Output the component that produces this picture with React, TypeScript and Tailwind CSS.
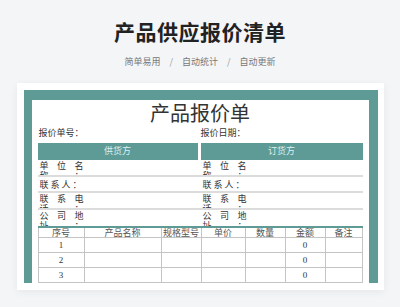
const cols = [
  { label: '序号', w: 'w-[45px]' },
  { label: '产品名称', w: 'w-[77px]' },
  { label: '规格型号', w: 'w-[40px]' },
  { label: '单价', w: 'w-[44px]' },
  { label: '数量', w: 'w-[40px]' },
  { label: '金额', w: 'w-[40px]' },
  { label: '备注', w: 'flex-1' },
];

function SplitLabel({ chars, tail }: { chars: string[]; tail: string }) {
  return (
    <div className="w-[44px] ml-[2px] text-[9px] leading-[10px] pt-[1px]">
      <div className="flex justify-between">
        {chars.map((c) => (
          <span key={c}>{c}</span>
        ))}
      </div>
      <div className="flex justify-between">
        <span>{tail}</span>
        <span className="w-[9px]">：</span>
      </div>
    </div>
  );
}

function InfoRow({ h, children }: { h: string; children: React.ReactNode }) {
  return (
    <div className={`flex ${h} overflow-hidden border-b-[2px] border-[#dcdcdc]`}>
      <div className="w-[163px]">{children}</div>
      <div className="flex-1">{children}</div>
    </div>
  );
}

export default function App() {
  return (
    <div className="w-[400px] h-[307px] overflow-hidden bg-[#f4f5f7] flex flex-col items-center font-['Noto_Sans_CJK_SC',sans-serif]">
      {/* Header */}
      <h1 className="mt-[19px] text-[21px] leading-[24px] font-bold text-[#222] tracking-[0.5px]">产品供应报价清单</h1>
      <p className="mt-[12px] text-[9px] leading-[14px] text-[#777] flex gap-[9px]">
        <span>简单易用</span>
        <span className="text-[#999]">/</span>
        <span>自动统计</span>
        <span className="text-[#999]">/</span>
        <span>自动更新</span>
      </p>

      {/* Card */}
      <div className="mt-[14px] w-[367px] bg-white pt-[7px] pl-[7px] pr-[6px] pb-[7px] shadow-[0_2px_8px_rgba(0,0,0,0.06)]">
        <div className="bg-[#5e9b97] pt-[10px] pl-[8px] pr-[9px]">
          <div className="bg-white px-[6px] text-[#333] font-['Liberation_Serif','Noto_Sans_CJK_SC',serif]">
            <div className="h-[27px] pt-[1px] leading-[26px] text-center text-[20px] text-[#333]">产品报价单</div>
            <div className="flex h-[13px] items-center text-[9px]">
              <div className="w-[163px] pl-[1px]">报价单号：</div>
              <div>报价日期：</div>
            </div>

            {/* party headers */}
            <div className="mt-[3px] flex gap-[3px] h-[17px] text-[9px] text-[#dff0ee]">
              <div className="w-[160px] bg-[#5e9b97] flex items-center justify-center">供货方</div>
              <div className="flex-1 bg-[#5e9b97] flex items-center justify-center">订货方</div>
            </div>

            <InfoRow h="h-[17px]">
              <SplitLabel chars={['单', '位', '名']} tail="称" />
            </InfoRow>
            <InfoRow h="h-[16px]">
              <div className="ml-[2px] pt-[3px] text-[9px] leading-[10px] tracking-[2px]">联系人：</div>
            </InfoRow>
            <InfoRow h="h-[17px]">
              <SplitLabel chars={['联', '系', '电']} tail="话" />
            </InfoRow>
            <div className="flex h-[16px] overflow-hidden">
              <div className="w-[163px]">
                <SplitLabel chars={['公', '司', '地']} tail="址" />
              </div>
              <div className="flex-1">
                <SplitLabel chars={['公', '司', '地']} tail="址" />
              </div>
            </div>

            {/* items table */}
            <div className="border-t-[2px] border-[#5e9b97] text-[9px]">
              <div className="flex h-[10px] leading-[10px] border-x border-b border-[#c4c4c4] text-[#555]">
                {cols.map((c, i) => (
                  <div key={c.label} className={`${c.w} text-center ${i > 0 ? 'border-l border-[#c4c4c4]' : ''}`}>
                    {c.label}
                  </div>
                ))}
              </div>
              {[1, 2, 3].map((n) => (
                <div key={n} className="flex h-[15px] leading-[14px] border-x border-b border-[#c4c4c4] text-[#333]">
                  {cols.map((c, i) => (
                    <div key={c.label} className={`${c.w} text-center ${i > 0 ? 'border-l border-[#c4c4c4]' : ''}`}>
                      {i === 0 ? n : i === 5 ? 0 : ''}
                    </div>
                  ))}
                </div>
              ))}
            </div>
          </div>
        </div>
      </div>
    </div>
  );
}
